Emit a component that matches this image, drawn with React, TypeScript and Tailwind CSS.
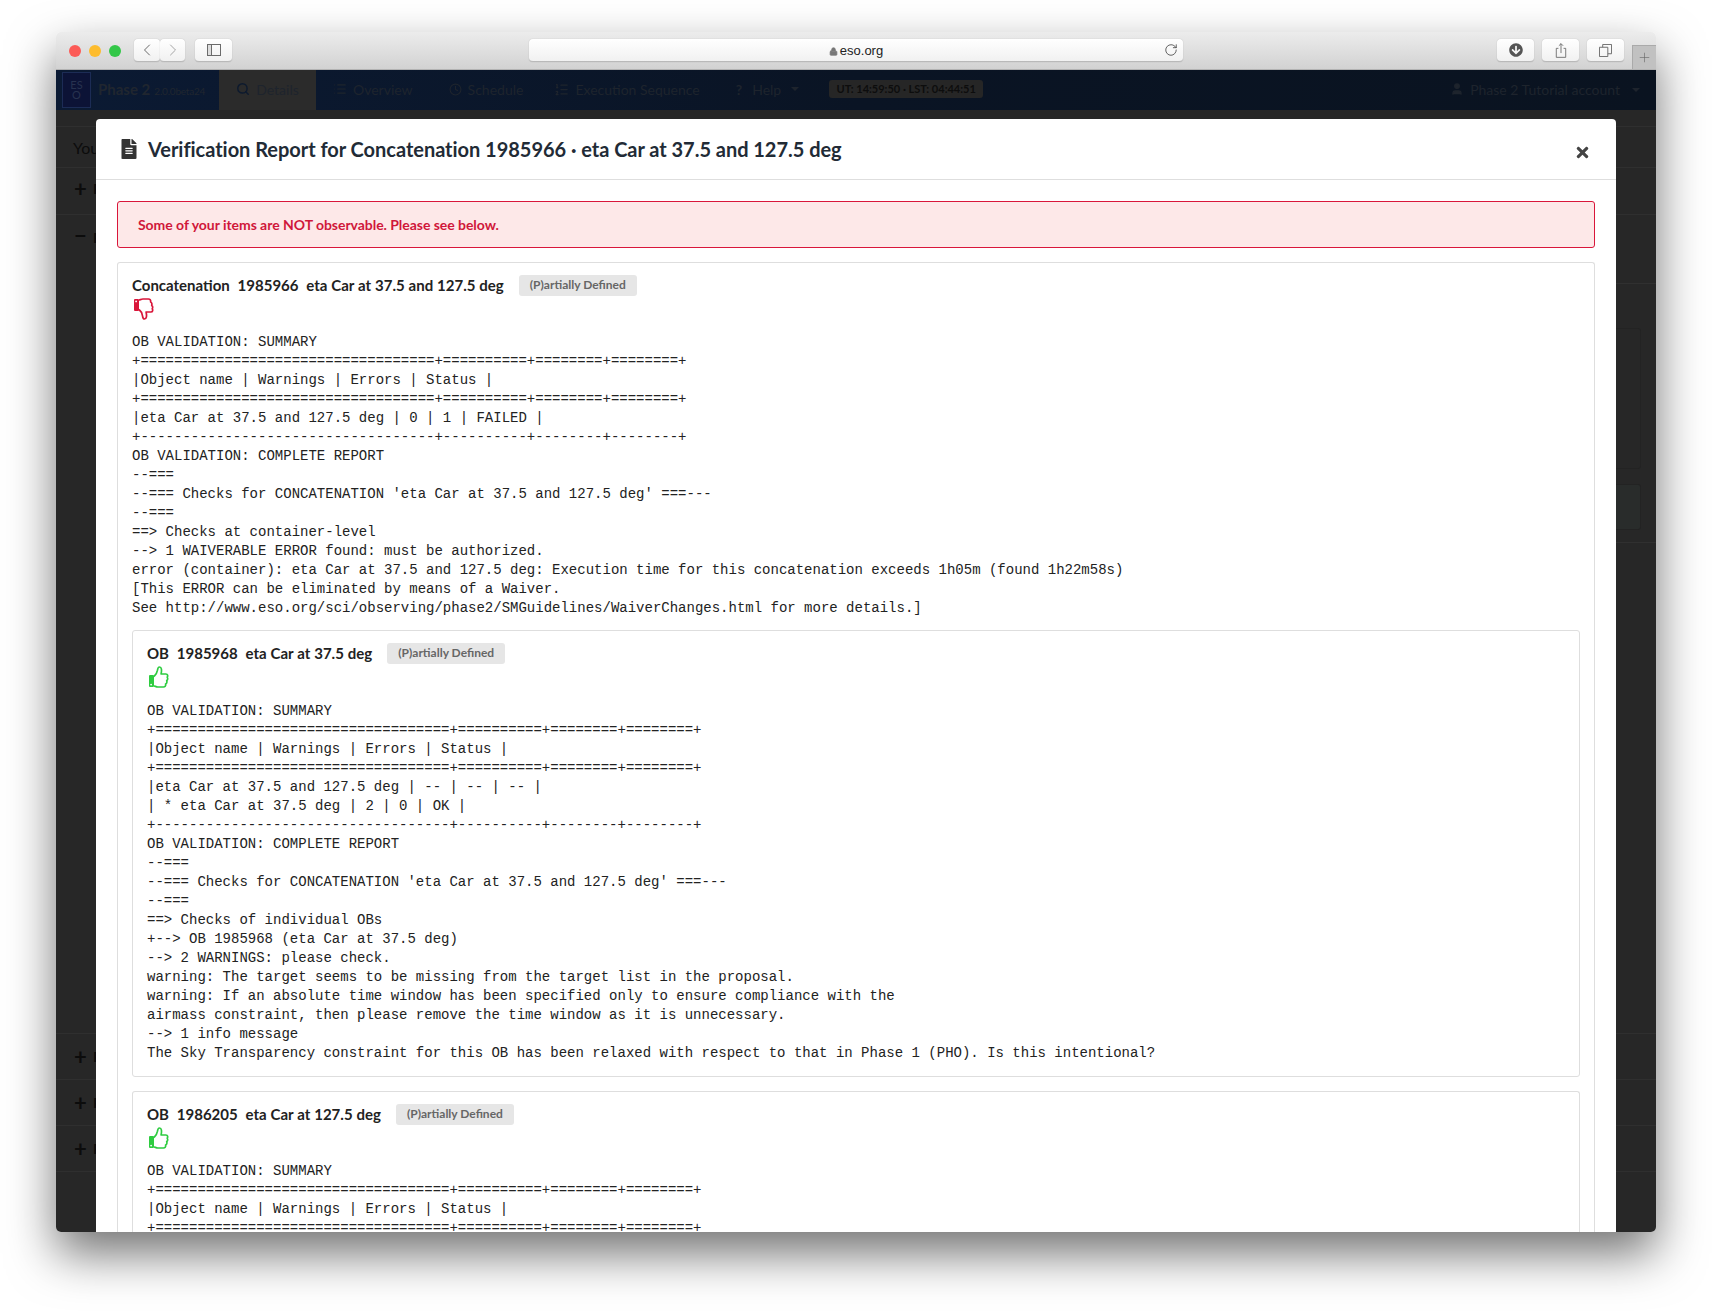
import React from 'react';
import { ChevronLeft, ChevronRight, Lock, RotateCw, Plus, Search, Clock, ListOrdered, List, User } from 'lucide-react';
import { FaFileAlt, FaTimes, FaArrowCircleDown } from 'react-icons/fa';

const bar = '+===================================+==========+========+========+';
const dash = '+-----------------------------------+----------+--------+--------+';
const header = '|Object name | Warnings | Errors | Status |';

const concatLines = [
  'OB VALIDATION: SUMMARY',
  bar,
  header,
  bar,
  '|eta Car at 37.5 and 127.5 deg | 0 | 1 | FAILED |',
  dash,
  'OB VALIDATION: COMPLETE REPORT',
  '--===',
  "--=== Checks for CONCATENATION 'eta Car at 37.5 and 127.5 deg' ===---",
  '--===',
  '==> Checks at container-level',
  '--> 1 WAIVERABLE ERROR found: must be authorized.',
  'error (container): eta Car at 37.5 and 127.5 deg: Execution time for this concatenation exceeds 1h05m (found 1h22m58s)',
  '[This ERROR can be eliminated by means of a Waiver.',
  'See http://www.eso.org/sci/observing/phase2/SMGuidelines/WaiverChanges.html for more details.]',
];

const obLines = [
  'OB VALIDATION: SUMMARY',
  bar,
  header,
  bar,
  '|eta Car at 37.5 and 127.5 deg | -- | -- | -- |',
  '| * eta Car at 37.5 deg | 2 | 0 | OK |',
  dash,
  'OB VALIDATION: COMPLETE REPORT',
  '--===',
  "--=== Checks for CONCATENATION 'eta Car at 37.5 and 127.5 deg' ===---",
  '--===',
  '==> Checks of individual OBs',
  '+--> OB 1985968 (eta Car at 37.5 deg)',
  '--> 2 WARNINGS: please check.',
  'warning: The target seems to be missing from the target list in the proposal.',
  'warning: If an absolute time window has been specified only to ensure compliance with the',
  'airmass constraint, then please remove the time window as it is unnecessary.',
  '--> 1 info message',
  'The Sky Transparency constraint for this OB has been relaxed with respect to that in Phase 1 (PHO). Is this intentional?',
];

const ob2Lines = ['OB VALIDATION: SUMMARY', bar, header, bar];

const Thumb = ({ down }: { down?: boolean }) => (
  <svg
    viewBox="0 0 20 22"
    className={down ? 'ml-[1px] w-[21px] h-[22px] -scale-y-100 text-[#d9163a]' : 'ml-[1px] w-[21px] h-[22px] text-[#2ecc40]'}
    fill="none"
    stroke="currentColor"
    strokeWidth={1.7}
    strokeLinejoin="round"
  >
    <rect x="0.5" y="9" width="5" height="12" rx="1" fill="currentColor" stroke="none" />
    <circle cx="2.6" cy="18.6" r="0.9" fill="#fff" stroke="none" />
    <path d="M5.5 10.5C7.5 9 8.6 6.4 9 4.2C9.3 2 10 1 11 1C13.2 1 13.4 4.4 12.6 8L17.4 8C19.4 8 19.6 10.4 18.7 11.2C19.6 12.2 19.2 14 18.2 14.6C18.8 16 18.1 17.6 17.1 18C17.5 20 16.4 21 15 21L9.4 21C7.6 21 6.6 20 5.5 20" />
  </svg>
);

const Panel = ({
  kind,
  id,
  name,
  down,
  lines,
  nested,
  last,
  children,
}: {
  kind: string;
  id: string;
  name: string;
  down?: boolean;
  lines: string[];
  nested?: boolean;
  last?: boolean;
  children?: React.ReactNode;
}) => (
  <div
    className={`border border-[#dedede] rounded-[3px] bg-white px-[14px] pt-[11px] pb-[13px] ${nested ? 'mt-[12px]' : ''} ${last ? 'pb-0 border-b-0' : ''}`}
  >
    <div className="flex items-center h-[22px]">
      <span className="text-[15px] font-bold text-[#222] whitespace-pre [word-spacing:0.25px]">
        {kind}  {id}  {name}
      </span>
      <span className="ml-[15px] h-[21px] w-[118px] flex items-center justify-center rounded-[3px] bg-[#e6e6e6] text-[#666] text-[12px] font-bold">
        (P)artially Defined
      </span>
    </div>
    <div className="mt-[2px] h-[22px]">
      <Thumb down={down} />
    </div>
    <pre
      className={`font-['Liberation_Mono',monospace] text-[14px] leading-[19px] text-[#222] ${nested ? 'mt-[14px]' : 'mt-[13px]'}`}
    >
      {lines.join('\n')}
    </pre>
    {children}
  </div>
);

const ToolButton = ({ children, className }: { children: React.ReactNode; className?: string }) => (
  <div
    className={`h-[23px] flex items-center justify-center rounded-[4px] bg-gradient-to-b from-white to-[#f1f1f1] border-b border-[#b9b9b9] shadow-[0_0_1px_rgba(0,0,0,0.3)] text-[#6b6b6b] ${className ?? ''}`}
  >
    {children}
  </div>
);

const Toolbar = () => (
  <div className="h-[38px] flex items-center pl-[13px] bg-gradient-to-b from-[#ececec] to-[#d2d2d2] border-b border-[#b2b2b2] shrink-0">
    <div className="flex gap-[8px]">
      <span className="w-[12px] h-[12px] rounded-full bg-[#fc5b57]" />
      <span className="w-[12px] h-[12px] rounded-full bg-[#fdbc2e]" />
      <span className="w-[12px] h-[12px] rounded-full bg-[#33c748]" />
    </div>
    <div className="ml-[13px] flex">
      <ToolButton className="w-[26px]">
        <ChevronLeft size={20} strokeWidth={1.2} />
      </ToolButton>
      <ToolButton className="w-[25px] text-[#a5a5a5]">
        <ChevronRight size={20} strokeWidth={1.2} />
      </ToolButton>
    </div>
    <ToolButton className="ml-[10px] w-[37px]">
      <span className="w-[14px] h-[12px] border border-[#6b6b6b] flex">
        <span className="w-[4px] border-r border-[#6b6b6b] bg-[#ddd]" />
      </span>
    </ToolButton>
    <ToolButton className="ml-[297px] w-[654px] relative text-[#222] pt-[2px]">
      <Lock size={9} fill="#777" stroke="#777" className="mr-[2px]" />
      <span className="text-[13px] font-['Liberation_Sans',sans-serif] text-[#222]">eso.org</span>
      <RotateCw size={14} strokeWidth={1.4} className="absolute right-[5px] top-[4px] text-[#444]" />
    </ToolButton>
    <ToolButton className="ml-[314px] w-[37px]">
      <FaArrowCircleDown size={14} className="text-[#555]" />
    </ToolButton>
    <ToolButton className="ml-[8px] w-[37px]">
      <svg viewBox="0 0 14 18" className="w-[12px] h-[17px]" fill="none" stroke="#666" strokeWidth={1}>
        <path d="M4 6.5H1.5V17H12.5V6.5H10M7 12V1M4.5 3.5L7 1L9.5 3.5" />
      </svg>
    </ToolButton>
    <ToolButton className="ml-[8px] w-[37px]">
      <svg viewBox="0 0 14 14" className="w-[13px] h-[13px]" fill="none" stroke="#666" strokeWidth={1}>
        <path d="M0.5 3.5H9.5V13.5H0.5ZM4 3.5V0.5H13.5V10.5H9.5" />
      </svg>
    </ToolButton>
    <div className="ml-[8px] self-end w-[24px] h-[24px] bg-[#c1c1c1] border-l border-t border-[#aaa] flex items-center justify-center text-[#666]">
      <Plus size={15} strokeWidth={1} />
    </div>
  </div>
);

const NavItem = ({ icon, label, className }: { icon: React.ReactNode; label: string; className?: string }) => (
  <div className={`flex items-center gap-[6px] pb-[2px] text-[14px] text-[#1e242d] ${className ?? ''}`}>
    {icon}
    <span>{label}</span>
  </div>
);

const Caret = () => <span className="block w-0 h-0 border-x-[4px] border-x-transparent border-t-[4px] border-t-[#1e242d]" />;

const Navbar = () => (
  <div className="h-[40px] flex items-stretch bg-gradient-to-r from-[#0b1a33] via-[#0a1424] to-[#0a1320] shrink-0">
    <svg viewBox="0 0 29 36" className="ml-[6px] mt-[2px] w-[29px] h-[36px] shrink-0">
      <rect x="0.5" y="0.5" width="28" height="35" fill="#0c1336" stroke="#1c2c55" />
      <text x="14.5" y="17" textAnchor="middle" fontSize="11" fill="#27324f">ES</text>
      <text x="14.5" y="27" textAnchor="middle" fontSize="11" fill="#27324f">O</text>
    </svg>
    <div className="ml-[7px] w-[121px] flex items-baseline pt-[8px] text-[#20262f]">
      <span className="text-[15px] font-bold">Phase 2</span>
      <span className="ml-[4px] text-[10px] tracking-[-0.2px]">2.0.0beta24</span>
    </div>
    <NavItem
      className="w-[97px] bg-[#2b2b2b] justify-center"
      icon={<Search size={14} strokeWidth={2.5} className="text-[#0d1a2e]" />}
      label="Details"
    />
    <NavItem className="ml-[17px]" icon={<List size={14} />} label="Overview" />
    <NavItem className="ml-[36px]" icon={<Clock size={13} />} label="Schedule" />
    <NavItem className="ml-[31px]" icon={<ListOrdered size={15} />} label="Execution Sequence" />
    <NavItem className="ml-[36px] gap-[10px]" icon={<span className="font-bold">?</span>} label="Help" />
    <div className="ml-[10px] flex items-center pb-[2px]">
      <Caret />
    </div>
    <div className="ml-[30px] flex items-center pb-[2px]">
      <span className="h-[18px] w-[154px] flex items-center justify-center rounded-[3px] bg-[#262626] text-[11px] font-bold text-[#0d0d0d]">
        UT: 14:59:50 · LST: 04:44:51
      </span>
    </div>
    <div className="ml-auto mr-[16px] flex items-center gap-[12px]">
      <NavItem icon={<User size={14} fill="currentColor" />} label="Phase 2 Tutorial account" />
      <Caret />
    </div>
  </div>
);

const SideRow = ({ sign, className }: { sign: string; className?: string }) => (
  <div className={`border-b border-[#2f2f2f] flex items-center pl-[18px] text-[#0c0c0c] font-bold text-[22px] ${className ?? ''}`}>
    <span className="w-[19px]">{sign}</span>
    <span className="text-[14px]">P</span>
  </div>
);

// dimmed page that sits behind the modal
const PageBehind = () => (
  <div className="flex-1 bg-[#272727] flex flex-col min-h-0">
    <div className="h-[17px] border-b border-[#2f2f2f]" />
    <div className="h-[41px] border-b border-[#2f2f2f] flex items-center pl-[17px] pt-[2px] text-[16px] text-[#0c0c0c]">You</div>
    <SideRow sign="+" className="h-[47px] pb-[6px]" />
    <div className="h-[819px] border-b border-[#2f2f2f]">
      <div className="pl-[18px] pt-[4px] h-[36px] flex text-[#0c0c0c] font-bold text-[22px]">
        <span className="w-[19px]">−</span>
        <span className="text-[14px] pt-[8px]">P</span>
      </div>
      <div className="ml-auto mt-[32px] w-[100px] h-[260px] border border-r-0 border-[#303030] rounded-l-[3px] pr-[15px] pt-[44px]">
        <div className="h-[141px] border border-l-0 border-[#232323] rounded-r-[3px]" />
        <div className="mt-[15px] h-[46px] border border-l-0 border-[#232323] rounded-r-[3px] bg-[#292c2b]" />
      </div>
    </div>
    <SideRow sign="+" className="h-[46px]" />
    <SideRow sign="+" className="h-[46px]" />
    <SideRow sign="+" className="h-[46px]" />
  </div>
);

const Modal = () => (
  <div className="absolute left-[40px] top-[49px] bottom-0 w-[1520px] bg-white rounded-t-[4px] overflow-hidden">
    <div className="h-[61px] border-b border-[#dedede] flex items-center pl-[24px] pr-[26px]">
      <FaFileAlt className="ml-[1px] w-[16px] h-[20px] text-[#333]" />
      <h4 className="ml-[11px] text-[20px] font-bold text-[#222b36] tracking-[-0.03px]">
        Verification Report for Concatenation 1985966 · eta Car at 37.5 and 127.5 deg
      </h4>
      <FaTimes className="ml-auto mt-[6px] w-[15px] h-[17px] text-[#444]" />
    </div>
    <div className="pt-[21px] px-[21px]">
      <div className="h-[47px] border border-[#d9163a] rounded-[3px] bg-[#fde8e8] flex items-center pl-[20px] text-[14px] font-bold text-[#d0173a] tracking-[-0.04px]">
        Some of your items are NOT observable. Please see below.
      </div>
      <div className="mt-[14px]">
        <Panel kind="Concatenation" id="1985966" name="eta Car at 37.5 and 127.5 deg" down lines={concatLines} last>
          <Panel nested kind="OB" id="1985968" name="eta Car at 37.5 deg" lines={obLines} />
          <div className="mt-[14px]">
            <Panel kind="OB" id="1986205" name="eta Car at 127.5 deg" lines={ob2Lines} last />
          </div>
        </Panel>
      </div>
    </div>
  </div>
);

export default function App() {
  return (
    <div className="h-[1312px] bg-white pt-[32px] pl-[56px] overflow-hidden font-['Lato',sans-serif]">
      <div className="w-[1600px] h-[1200px] flex flex-col rounded-[5px] overflow-hidden shadow-[0_22px_48px_rgba(0,0,0,0.55)]">
        <Toolbar />
        <div className="relative flex-1 flex flex-col min-h-0">
          <Navbar />
          <PageBehind />
          <Modal />
        </div>
      </div>
    </div>
  );
}
